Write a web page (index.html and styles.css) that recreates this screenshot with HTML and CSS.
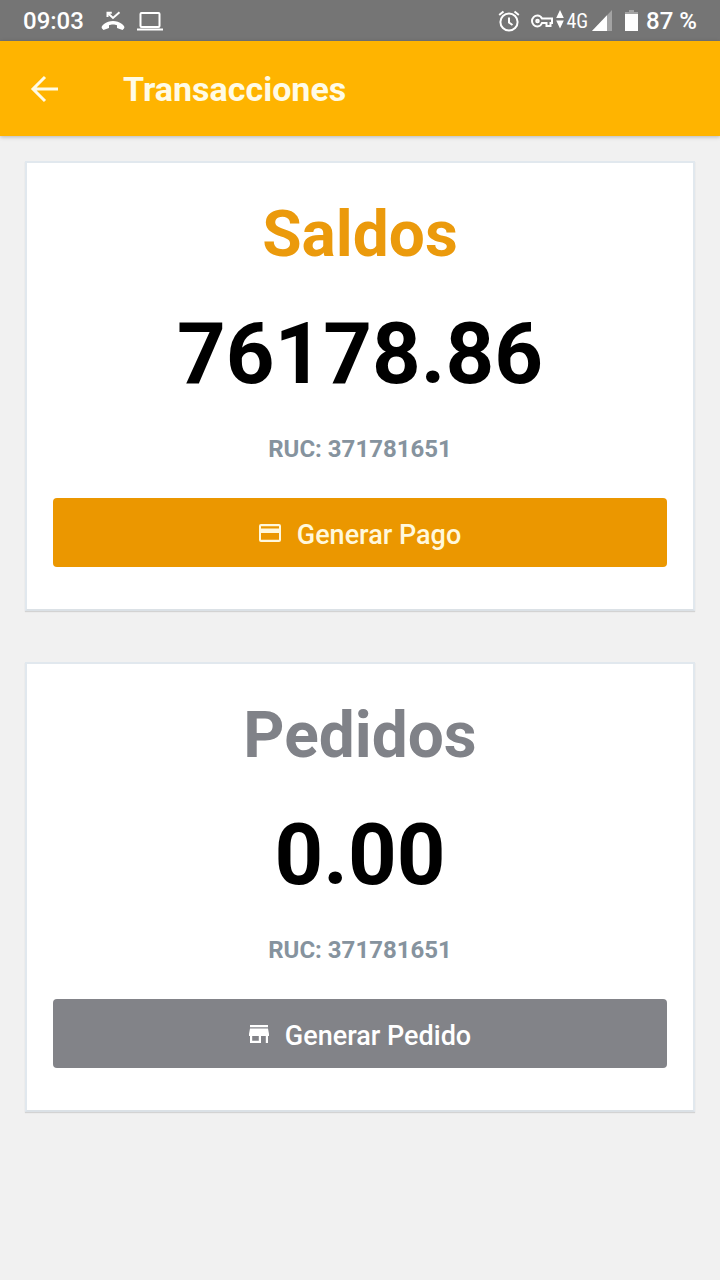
FILE: index.html
```html
<!DOCTYPE html>
<html lang="es">
<head>
<meta charset="utf-8">
<meta name="viewport" content="width=device-width, initial-scale=1">
<title>Transacciones</title>
<link rel="stylesheet" href="styles.css">
</head>
<body>
<div class="status-bar">
  <div class="status-left">
    <span class="clock">09:03</span>
    <svg class="icon-call" width="24" height="20" viewBox="0 0 24 20" fill="#fff" aria-hidden="true">
      <path d="M1 17.500C0 16 1 14.500 3 13C8 9 16 9 21 13C23 14.500 24 16 23 17.500L21.500 19L16 17V14.200C14 13.200 10 13.200 8 14.200V17L2.500 19Z"/>
      <path d="M6.500 6V1.800H10.800M7 2.200L12 7L18.500 1.200" fill="none" stroke="#fff" stroke-width="2"/>
    </svg>
    <svg class="icon-laptop" width="26" height="20" viewBox="0 0 26 20" fill="none" stroke="#fff" stroke-width="2" aria-hidden="true">
      <rect x="3.500" y="2" width="19" height="14" rx="1"/>
      <path d="M0 18.500H26"/>
    </svg>
  </div>
  <div class="status-right">
    <svg width="22" height="22" viewBox="0 0 22 22" fill="none" stroke="#fff" stroke-width="2" aria-hidden="true">
      <circle cx="11" cy="12" r="8.600"/>
      <path d="M11 7.500V12.500L14.500 15M1.200 5L5.500 1.500M16.500 1.500L20.800 5"/>
    </svg>
    <svg class="icon-key" width="22" height="14" viewBox="0 0 22 14" fill="none" stroke="#fff" stroke-width="2" aria-hidden="true">
      <path d="M11 4.500H21V9H19.500V12H15.500V9H11C10 11.500 8.500 12.500 6.500 12.500A5.500 5.500 0 0 1 6.500 1.500C8.500 1.500 10 2.500 11 4.500Z"/>
      <circle cx="6.500" cy="7" r="1.300"/>
    </svg>
    <svg class="icon-data" width="8" height="22" viewBox="0 0 8 22" fill="#fff" aria-hidden="true">
      <path d="M4 0L7.800 8H.2ZM.2 10.500H7.800L4 18.500Z"/>
    </svg>
    <span class="network">4G</span>
    <svg class="icon-signal" width="20" height="22" viewBox="0 0 20 22" aria-hidden="true">
      <path d="M20 0V21H0Z" fill="#a3a3a3"/>
      <path d="M15 5.250V21H0Z" fill="#fff"/>
    </svg>
    <svg class="icon-battery" width="13" height="22" viewBox="0 0 13 22" aria-hidden="true">
      <path d="M4 0H9V2H13V5H0V2H4Z" fill="#a3a3a3"/>
      <path d="M0 4H13V21H0Z" fill="#fff"/>
    </svg>
    <span class="charge">87 %</span>
  </div>
</div>
<header class="app-bar">
  <button class="back" type="button" aria-label="Volver">
    <svg width="28" height="28" viewBox="0 0 28 28" fill="none" stroke="#fffbe6" stroke-width="3" aria-hidden="true">
      <path d="M28 14H3M15 2L3 14L15 26"/>
    </svg>
  </button>
  <h1 class="app-title">Transacciones</h1>
</header>
<main class="content">
  <section class="card">
    <h2 class="card-title accent">Saldos</h2>
    <p class="amount">76178.86</p>
    <p class="ruc">RUC: 371781651</p>
    <button class="action action-pay" type="button">
      <svg width="22" height="18" viewBox="0 0 22 18" aria-hidden="true">
        <path fill="currentColor" fill-rule="evenodd" d="M2 0H20Q22 0 22 2V16Q22 18 20 18H2Q0 18 0 16V2Q0 0 2 0ZM2 2.200V4.400H20V2.200ZM2 9V15.800H20V9Z"/>
      </svg>
      <span>Generar Pago</span>
    </button>
  </section>
  <section class="card">
    <h2 class="card-title muted">Pedidos</h2>
    <p class="amount">0.00</p>
    <p class="ruc">RUC: 371781651</p>
    <button class="action action-order" type="button">
      <svg width="20" height="18" viewBox="0 0 20 18" aria-hidden="true">
        <path fill="currentColor" fill-rule="evenodd" d="M1 0H19V2.200H1ZM1 3.400H19L20 9V11H19V18H16.800V11H12V18H1V11H0V9ZM3.200 11V15.800H9.800V11Z"/>
      </svg>
      <span>Generar Pedido</span>
    </button>
  </section>
</main>
</body>
</html>
```
FILE: styles.css
```css
* {
  box-sizing: border-box;
}

body {
  margin: 0;
  min-height: 100vh;
  background: #f1f1f1;
  font-family: Roboto, "Liberation Sans", sans-serif;
}

h1,
h2,
p {
  margin: 0;
}

svg {
  display: block;
  flex: none;
}

.status-bar {
  display: flex;
  align-items: center;
  justify-content: space-between;
  height: 41px;
  padding: 1px 23px 0;
  background: #757575;
  color: #fff;
  font-size: 24px;
  font-weight: 500;
}

.status-left,
.status-right {
  display: flex;
  align-items: center;
}

.icon-call {
  margin-left: 17px;
}

.icon-laptop {
  margin-left: 12px;
}

.icon-key {
  margin-left: 11px;
}

.icon-data {
  margin-left: 3px;
}

.network {
  margin-left: 2px;
  font-family: "Roboto Condensed", Roboto, sans-serif;
  font-size: 20px;
  font-weight: 400;
}

.icon-signal {
  margin-left: 4px;
}

.icon-battery {
  margin: 0 8px 0 13px;
}

.app-bar {
  position: relative;
  display: flex;
  align-items: center;
  height: 95px;
  padding: 0 30px;
  background: #ffb400;
  box-shadow: 0 1px 4px rgba(0, 0, 0, 0.25);
}

.back {
  padding: 0;
  border: 0;
  background: none;
}

.app-title {
  margin-left: 65px;
  color: #fffbe6;
  font-size: 34px;
  font-weight: 700;
  line-height: 40px;
}

.content {
  display: flex;
  flex-direction: column;
  gap: 51px;
  padding: 25px;
}

.card {
  display: flex;
  flex-direction: column;
  padding: 27px 26px 42px;
  border: 2px solid #e1e8ee;
  border-bottom-color: #dbe1e6;
  background: #fff;
  box-shadow: 0 1px 1px rgba(0, 0, 0, 0.12);
  text-align: center;
}

.card-title {
  font-size: 64px;
  font-weight: 700;
  line-height: 90px;
}

.accent {
  color: #eb9a0c;
}

.muted {
  color: #808288;
}

.amount {
  color: #000;
  font-size: 85px;
  font-weight: 700;
  line-height: 148px;
}

.ruc {
  color: #86939e;
  font-size: 24px;
  font-weight: 700;
  line-height: 42px;
}

.action {
  display: flex;
  align-items: center;
  justify-content: center;
  gap: 16px;
  height: 69px;
  margin-top: 28px;
  padding: 4px 0 0;
  border: 0;
  border-radius: 4px;
  font-family: inherit;
  font-size: 27px;
  font-weight: 500;
}

.action svg {
  margin-bottom: 4px;
}

.action-pay {
  background: #eb9700;
  color: #fff8dc;
}

.action-order {
  background: #828388;
  color: #fff;
}
```
